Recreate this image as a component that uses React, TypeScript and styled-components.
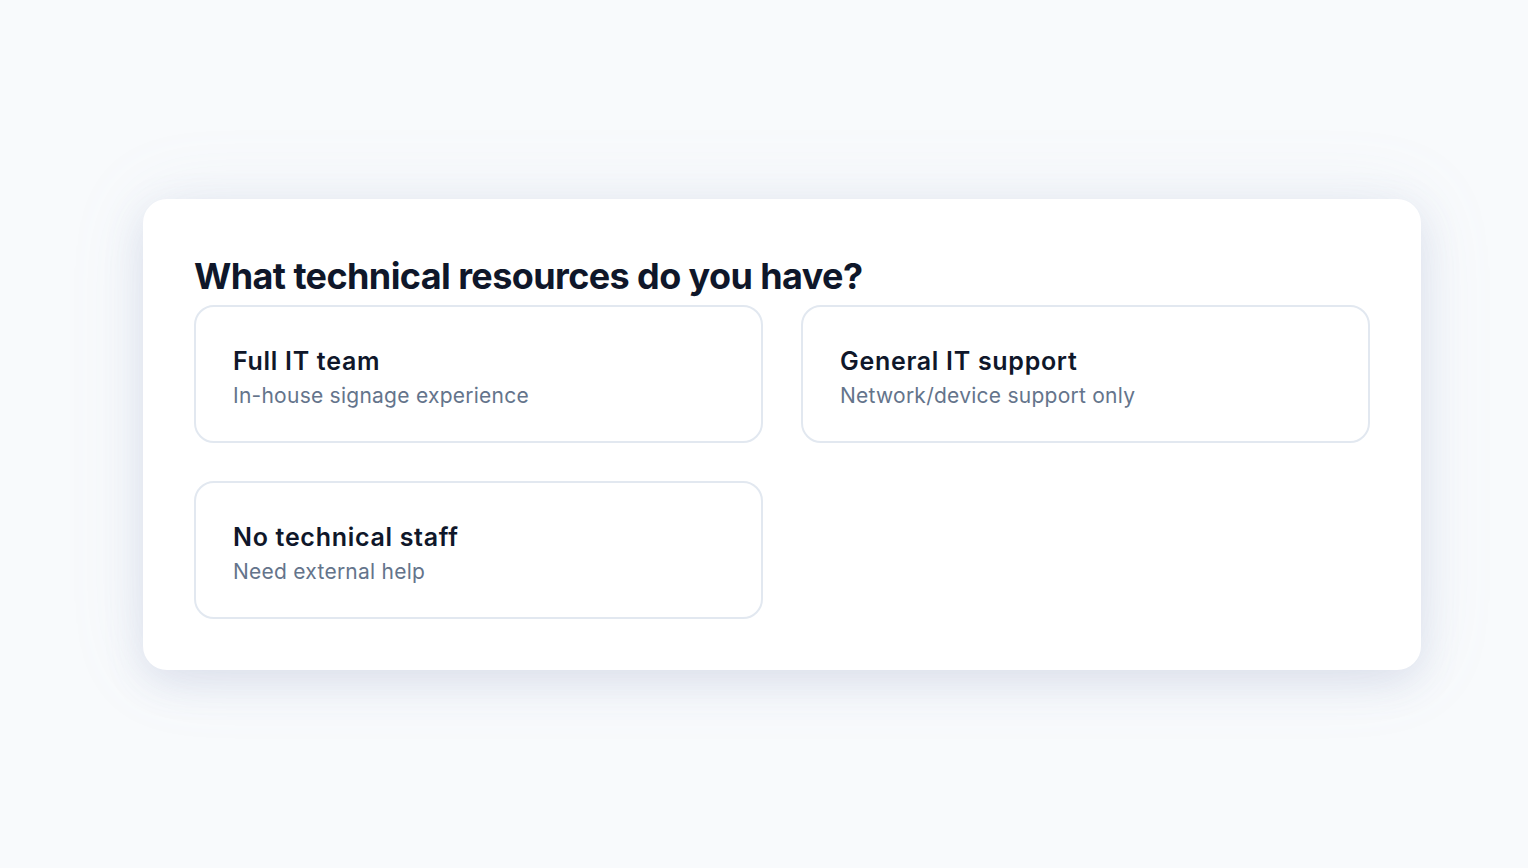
import React from "react";
import styled, { createGlobalStyle } from "styled-components";

const Global = createGlobalStyle`
  html, body { margin: 0; padding: 0; background: #f8fafc; }
  body { font-family: Inter, "Noto Sans", sans-serif; -webkit-font-smoothing: antialiased; }
`;

const Page = styled.div`
  min-height: 868px;
  display: flex;
  align-items: center;
  justify-content: center;
  box-sizing: border-box;
  padding: 1px 107px 0 143px;
`;

const Card = styled.section`
  width: 1278px;
  box-sizing: border-box;
  background: #ffffff;
  border-radius: 24px;
  padding: 51px;
  box-shadow: 0 12px 40px rgba(99, 112, 170, 0.16), 0 0 80px rgba(148, 163, 200, 0.1);
`;

const Title = styled.h2`
  margin: 0 0 2px;
  font-size: 36px;
  line-height: 53px;
  font-weight: 700;
  color: #0f172a;
  letter-spacing: -0.6px;
`;

const Grid = styled.div`
  display: grid;
  grid-template-columns: 1fr 1fr;
  gap: 38px;
`;

const Option = styled.button`
  all: unset;
  box-sizing: border-box;
  height: 138px;
  border: 2px solid #e2e8f0;
  border-radius: 20px;
  padding: 6px 37px 0;
  display: flex;
  flex-direction: column;
  justify-content: center;
  gap: 5px;
  cursor: pointer;
  background: #fff;
`;

const OptionTitle = styled.span`
  font-size: 25px;
  line-height: 32px;
  font-weight: 600;
  color: #0f172a;
  letter-spacing: 0.7px;
`;

const OptionSub = styled.span`
  font-size: 21px;
  line-height: 28px;
  font-weight: 400;
  color: #64748b;
  letter-spacing: 0.25px;
`;

const options = [
  { t: "Full IT team", s: "In-house signage experience" },
  { t: "General IT support", s: "Network/device support only" },
  { t: "No technical staff", s: "Need external help" },
];

export default function App() {
  return (
    <>
      <Global />
      <Page>
        <Card>
          <Title>What technical resources do you have?</Title>
          <Grid>
            {options.map((o) => (
              <Option key={o.t}>
                <OptionTitle>{o.t}</OptionTitle>
                <OptionSub>{o.s}</OptionSub>
              </Option>
            ))}
          </Grid>
        </Card>
      </Page>
    </>
  );
}
